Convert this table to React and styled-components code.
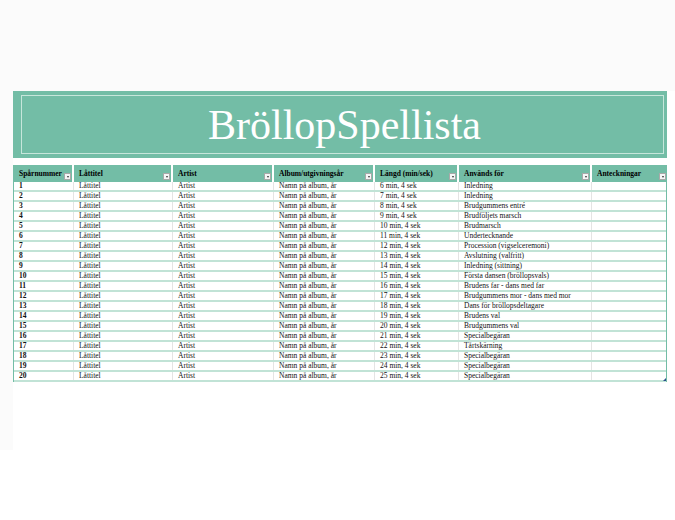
import React from 'react'
import styled, { createGlobalStyle } from 'styled-components'

const GlobalStyle = createGlobalStyle`
  html, body {
    margin: 0;
    padding: 0;
    background: #ffffff;
  }
  body {
    font-family: 'Liberation Serif', 'Times New Roman', serif;
    color: #111;
  }
`

const mint = '#73bda6'
const columns = '60px 99px 101px 101px 84px 133px 75px'

const Page = styled.div`
  height: 450px;
  background: #fbfbfb;
  padding: 91px 0 0 13px;
  box-sizing: border-box;
  display: flex;
`

const Sheet = styled.div`
  flex: 1;
  background: #ffffff;
  display: flex;
  flex-direction: column;
  gap: 7px;
`

const Banner = styled.div`
  width: 654px;
  height: 67px;
  box-sizing: border-box;
  background: ${mint};
  padding: 4px 3px 4px 8px;
  display: flex;
`

const BannerFrame = styled.div`
  flex: 1;
  border: 1px solid #c7e6db;
  display: flex;
  align-items: center;
  justify-content: center;
`

const Title = styled.h1`
  margin: 0 0 0 4px;
  font-family: 'Liberation Serif', 'Times New Roman', serif;
  font-weight: normal;
  font-size: 42px;
  line-height: 1;
  color: #ffffff;
`

const Table = styled.div`
  position: relative;
  width: 654px;
  box-sizing: border-box;
  border-left: 1px solid ${mint};
  border-right: 1px solid ${mint};
`

const HeaderRow = styled.div`
  display: grid;
  grid-template-columns: ${columns};
  height: 17px;
  background: ${mint};
`

const HeaderCell = styled.div`
  display: flex;
  align-items: center;
  justify-content: space-between;
  padding: 0 1px 0 5px;
  border-right: ${(p) => (p.$last ? 'none' : '2px solid #ffffff')};
  font-weight: bold;
  font-size: 7.5px;
  white-space: nowrap;
  color: #000;
`

const FilterButton = styled.span`
  align-self: flex-end;
  margin-bottom: 2px;
  width: 7px;
  height: 7px;
  box-sizing: border-box;
  background: #f6f6f6;
  border: 1px solid #a9a9a9;
  display: flex;
  align-items: center;
  justify-content: center;

  &::after {
    content: '';
    border-left: 1.5px solid transparent;
    border-right: 1.5px solid transparent;
    border-top: 2px solid #333;
  }
`

const Row = styled.div`
  display: grid;
  grid-template-columns: ${columns};
  height: 10px;
  box-sizing: border-box;
  border-bottom: 2px solid #c1e3d6;
`

const Cell = styled.div`
  padding-left: 5px;
  border-right: ${(p) => (p.$last ? 'none' : '1px solid #e4e4e4')};
  font-size: 7.5px;
  line-height: 8px;
  font-weight: ${(p) => (p.$bold ? 'bold' : 'normal')};
  white-space: nowrap;
  overflow: hidden;
  color: #111;
`

const ResizeHandle = styled.span`
  position: absolute;
  right: 0;
  bottom: 1px;
  width: 0;
  height: 0;
  border-left: 3px solid transparent;
  border-bottom: 3px solid #2b4f8c;
`

const headers = [
  'Spårnummer',
  'Låttitel',
  'Artist',
  'Album/utgivningsår',
  'Längd (min/sek)',
  'Används för',
  'Anteckningar',
]

const uses = [
  'Inledning',
  'Inledning',
  'Brudgummens entré',
  'Brudföljets marsch',
  'Brudmarsch',
  'Undertecknande',
  'Procession (vigselceremoni)',
  'Avslutning (valfritt)',
  'Inledning (sittning)',
  'Första dansen (bröllopsvals)',
  'Brudens far - dans med far',
  'Brudgummens mor - dans med mor',
  'Dans för bröllopsdeltagare',
  'Brudens val',
  'Brudgummens val',
  'Specialbegäran',
  'Tårtskärning',
  'Specialbegäran',
  'Specialbegäran',
  'Specialbegäran',
]

const tracks = uses.map((use, i) => ({
  nr: i + 1,
  title: 'Låttitel',
  artist: 'Artist',
  album: 'Namn på album, år',
  length: `${i + 6} min, 4 sek`,
  use,
  notes: '',
}))

export default function App() {
  return (
    <>
      <GlobalStyle />
      <Page>
        <Sheet>
          <Banner>
            <BannerFrame>
              <Title>BröllopSpellista</Title>
            </BannerFrame>
          </Banner>
          <Table>
            <HeaderRow>
              {headers.map((h, i) => (
                <HeaderCell key={h} $last={i === headers.length - 1}>
                  <span>{h}</span>
                  <FilterButton />
                </HeaderCell>
              ))}
            </HeaderRow>
            {tracks.map((t) => (
              <Row key={t.nr}>
                <Cell $bold>{t.nr}</Cell>
                <Cell>{t.title}</Cell>
                <Cell>{t.artist}</Cell>
                <Cell>{t.album}</Cell>
                <Cell>{t.length}</Cell>
                <Cell>{t.use}</Cell>
                <Cell $last>{t.notes}</Cell>
              </Row>
            ))}
            <ResizeHandle />
          </Table>
        </Sheet>
      </Page>
    </>
  )
}
